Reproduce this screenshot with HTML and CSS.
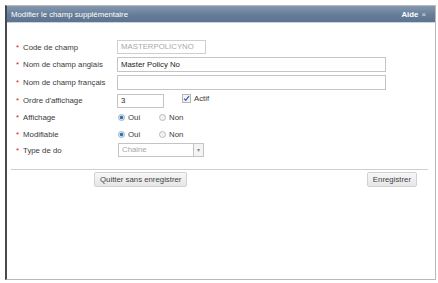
FILE: index.html
```html
<!DOCTYPE html>
<html lang="fr">
<head>
  <meta charset="UTF-8" />
  <title>Modifier le champ supplémentaire</title>
  <link rel="stylesheet" href="styles.css">
</head>
<body>
  <div class="dialog">
    <div class="dialog-header">
      <span class="title">Modifier le champ supplémentaire</span>
      <span class="help">Aide <span class="close">×</span></span>
    </div>

    <div class="form">
      <div class="row r1">
        <label><span class="req">*</span>Code de champ</label>
        <div class="field"><span class="input short disabled">MASTERPOLICYNO</span></div>
      </div>
      <div class="row r2">
        <label><span class="req">*</span>Nom de champ anglais</label>
        <div class="field"><span class="input wide">Master Policy No</span></div>
      </div>
      <div class="row r3">
        <label><span class="req">*</span>Nom de champ français</label>
        <div class="field"><span class="input wide"></span></div>
      </div>
      <div class="row r4">
        <label><span class="req">*</span>Ordre d'affichage</label>
        <div class="field">
          <span class="input tiny">3</span>
          <span class="check">
            <svg width="9" height="9" viewBox="0 0 9 9"><rect x="0.5" y="0.5" width="8" height="8" fill="#f4f4f4" stroke="#b5b5b5"/><path d="M2 4.6 L3.7 6.4 L7 2.2" fill="none" stroke="#2f5fb3" stroke-width="1.2"/></svg>
            Actif
          </span>
        </div>
      </div>
      <div class="row r5">
        <label><span class="req">*</span>Affichage</label>
        <div class="field">
          <span class="radio on"></span><span class="opt">Oui</span>
          <span class="radio"></span><span class="opt">Non</span>
        </div>
      </div>
      <div class="row r6">
        <label><span class="req">*</span>Modifiable</label>
        <div class="field">
          <span class="radio on"></span><span class="opt">Oui</span>
          <span class="radio"></span><span class="opt">Non</span>
        </div>
      </div>
      <div class="row r7">
        <label><span class="req">*</span>Type de do</label>
        <div class="field">
          <span class="select"><span class="select-text">Chaine</span><span class="arrow">▾</span></span>
        </div>
      </div>
    </div>

    <div class="actions">
      <button class="btn">Quitter sans enregistrer</button>
      <button class="btn">Enregistrer</button>
    </div>
  </div>
</body>
</html>
```

FILE: styles.css
```css
body {
  margin: 0;
  padding: 5px 3px 3px 5px;
  background: #fff;
  font-family: "Liberation Sans", Arial, sans-serif;
  font-size: 7.8px;
  color: #3a3a3a;
}
.dialog {
  width: 428px;
  height: 273px;
  border: 1px solid #b9b9b9;
  border-left: 2px solid #4a4a4a;
  display: flex;
  flex-direction: column;
}
.dialog-header {
  height: 16px;
  background: linear-gradient(#8499b0, #657d97 55%, #5c7490);
  border-bottom: 1px solid #c8d3de;
  display: flex;
  align-items: center;
  justify-content: space-between;
  padding: 0 9px 0 4px;
  color: #fff;
  font-size: 7.8px;
}
.help {
  font-weight: bold;
}
.close {
  font-weight: normal;
  color: #dfe6ee;
  margin-left: 1px;
}
.form {
  padding: 15px 0 0 9px;
  display: flex;
  flex-direction: column;
}
.row {
  display: flex;
  align-items: center;
}
.r1 { height: 18px; }
.r2 { height: 17px; }
.r3 { height: 19px; }
.r4 { height: 17px; }
.r5 { height: 17px; }
.r6 { height: 16px; }
.r7 { height: 16px; }
label {
  width: 101px;
}
.req {
  color: #d02020;
  margin-right: 4px;
}
.field {
  display: flex;
  align-items: center;
}
.input {
  display: block;
  box-sizing: border-box;
  height: 14px;
  line-height: 12px;
  border: 1px solid #c4c4c4;
  padding: 0 3px;
  color: #222;
  background: #fff;
}
.short { width: 89px; }
.wide { width: 269px; height: 15px; line-height: 13px; }
.tiny { width: 47px; }
.disabled {
  color: #a8a8a8;
  border-color: #cfcfcf;
}
.check {
  display: flex;
  align-items: center;
  gap: 3px;
  margin-left: 18px;
  margin-top: -4px;
}
.radio {
  width: 7px;
  height: 7px;
  box-sizing: border-box;
  border-radius: 50%;
  border: 1px solid #bcbcbc;
  background: #f2f2f2;
  margin-left: 1px;
}
.radio.on {
  background: radial-gradient(circle, #2e6a9e 0, #3f7fb3 45%, #e8eef4 60%);
  border-color: #9ab0c4;
}
.opt {
  margin-left: 3px;
  width: 30px;
}
.select {
  display: flex;
  box-sizing: border-box;
  width: 86px;
  height: 14px;
  border: 1px solid #c4c4c4;
  margin-left: 1px;
}
.select-text {
  flex: 1;
  padding-left: 3px;
  line-height: 12px;
  color: #a8a8a8;
}
.arrow {
  width: 9px;
  border-left: 1px solid #c4c4c4;
  background: #f4f4f4;
  color: #888;
  font-size: 6px;
  line-height: 12px;
  text-align: center;
}
.actions {
  margin: 11px 7px 0 4px;
  padding: 2px 11px 0 83px;
  border-top: 1px solid #cfcfcf;
  display: flex;
  justify-content: space-between;
}
.btn {
  height: 15px;
  padding: 0 5px;
  border: 1px solid #d2d2d2;
  border-radius: 2px;
  background: linear-gradient(#f7f7f7, #e6e6e6);
  font-family: "Liberation Sans", Arial, sans-serif;
  font-size: 7.8px;
  color: #444;
}
```
